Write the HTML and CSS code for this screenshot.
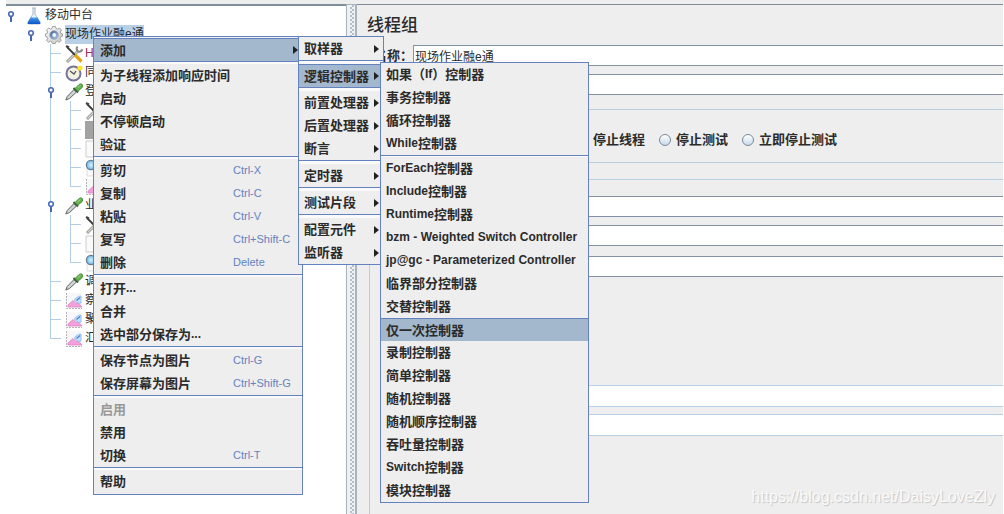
FILE: index.html
```html
<!DOCTYPE html>
<html lang="zh-CN">
<head>
<meta charset="utf-8">
<title>线程组</title>
<link rel="stylesheet" href="styles.css">
</head>
<body>
<svg class="defs" aria-hidden="true">
  <defs>
    <linearGradient id="liquid" x1="0" y1="0" x2="0" y2="1"><stop offset="0" stop-color="#4b9df0"/><stop offset="1" stop-color="#0b55c4"/></linearGradient>
    <linearGradient id="metal" x1="0" y1="0" x2="1" y2="1"><stop offset="0" stop-color="#fff"/><stop offset="1" stop-color="#c4c4c4"/></linearGradient>
    <linearGradient id="steel" x1="0" y1="0" x2="1" y2="1"><stop offset="0" stop-color="#39588f"/><stop offset="1" stop-color="#b9d2f2"/></linearGradient>
    <radialGradient id="lens"><stop offset="0" stop-color="#d8f2ff"/><stop offset="1" stop-color="#6db8e8"/></radialGradient>
  </defs>
  <symbol id="knob" viewBox="0 0 8 12"><path d="M4 6v6" stroke="#4666b0" stroke-width="2"/><circle cx="4" cy="4" r="2.3" fill="#fff" stroke="#4a6cba" stroke-width="1.6"/></symbol>
  <symbol id="flask" viewBox="0 0 18 18"><path d="M7 1h4M8 1v6L3 15q-1 2 1 2h10q2 0 1-2L10 7V1" fill="#eef3f8" stroke="#a9b8c8"/><path d="M6 10h6l3 5q1 2-1 2H4q-2 0-1-2z" fill="url(#liquid)"/><path d="M6 10q3 2 6 0" stroke="#9fd0ff" fill="none"/></symbol>
  <symbol id="gear" viewBox="0 0 18 18"><path d="M7.500.5h3l.5 2 1.500.7 2-1.200 2 2-1.200 2 .7 1.500 1.500.3v2.400l-1.800.6-.6 1.500 1.200 2-2 2-2-1.200-1.500.7-.5 1.700h-3L7 15.800l-1.500-.7-2 1.200-2-2 1.200-2-.7-1.500-1.500-.5V7.900L2.200 7.300 2.800 6 1.600 4l2-2 2 1.200L7 2.500z" fill="url(#metal)" stroke="#979797" stroke-width=".9"/><circle cx="9" cy="9" r="4.200" fill="url(#steel)" stroke="#8d9ab0" stroke-width=".8"/><circle cx="9.200" cy="9" r="1.900" fill="#f4f7fb"/></symbol>
  <symbol id="tools" viewBox="0 0 18 18"><path d="M2 17 13 6" stroke="#8c8c8c" stroke-width="2.800"/><path d="M2.500 16.500 12.500 6.500" stroke="#d6d6d6" stroke-width="1.200"/><path d="M12.500 1.500q-2 3 .8 5 3 .8 4.200-2.300" fill="none" stroke="#8a8a8a" stroke-width="2"/><path d="m2 2 8 8" stroke="#3a3a3a" stroke-width="1.800"/><path d="m10 10 6.500 6.500" stroke="#e5a313" stroke-width="3.200"/><path d="m1 1 3 1.500" stroke="#444" stroke-width="2"/></symbol>
  <symbol id="clock" viewBox="0 0 18 18"><circle cx="8.500" cy="9.500" r="7" fill="#f3f1df" stroke="#77749b" stroke-width="2"/><path d="M5 7l4 3 2-3" fill="none" stroke="#555" stroke-width="1.300"/><circle cx="15" cy="4" r="2.600" fill="#ffe326"/></symbol>
  <symbol id="dropper" viewBox="0 0 18 18"><path d="m.8 17 1.400-3.500L9 6.500l2.500 2.500-7 6.500z" fill="#cfd3d2" stroke="#5f6664"/><path d="m8.500 5 4.500 4.500" stroke="#3b5a35" stroke-width="2"/><path d="m10 5.500 4-4q2-1.500 3.300 0 1.200 1.500-.3 3.300l-4.200 3.500z" fill="#62b04b" stroke="#3f8535" stroke-width=".8"/><path d="m12.500 5 3-2.800" stroke="#a8dd92"/></symbol>
  <symbol id="page" viewBox="0 0 18 18"><path d="M1 1h15v16H1z" fill="#fafafa" stroke="#ccc"/><path d="M9 8h6m-3-2 3 2-3 3" stroke="#5d9bdc" fill="none"/></symbol>
  <symbol id="block" viewBox="0 0 18 18"><path d="M0 0h18v18H0z" fill="#a2a2a2"/></symbol>
  <symbol id="glass" viewBox="0 0 18 18"><path d="M2 7h15v10H2z" fill="#fafafa" stroke="#ddd"/><circle cx="6" cy="6" r="4.600" fill="url(#lens)" stroke="#647f96" stroke-width="1.300"/><path d="m10 10 5 5" stroke="#777" stroke-width="2"/></symbol>
  <symbol id="chart" viewBox="0 0 18 18"><path d="M1 1h16v15H1z" fill="#f7f7fa"/><path d="M1.500 1v15.500H17" fill="none" stroke="#b3b3b3" stroke-dasharray="2 1"/><path d="m3 15 0-2 5-4.500 3 3 2-1 4 4.500z" fill="#f3a0dd" stroke="#e07cc0" stroke-width=".7"/><path d="M9.500 9q0-3 2.500-3.500Q13 4 16 4v7q-2 1-4-.5z" fill="#c2e2ff" stroke="#8ab6ea" stroke-width=".8"/><path d="m11.500 8.500 3.500-3" stroke="#5379d3" stroke-width="1.200"/></symbol>
  <symbol id="arrow" viewBox="0 0 5 8"><path d="M0 0 5 4 0 8z" fill="#222"/></symbol>
</svg>

<main class="window">
  <nav class="tree-pane" aria-label="测试计划">
    <ul class="tree root">
      <li><div class="node"><svg class="knob"><use href="#knob"/></svg><svg class="icon"><use href="#flask"/></svg><span>移动中台</span></div>
        <ul class="tree">
          <li><div class="node"><svg class="knob"><use href="#knob"/></svg><svg class="icon"><use href="#gear"/></svg><span class="selected">现场作业融e通</span></div>
            <ul class="tree lined">
              <li><div class="node"><i class="twig"></i><svg class="icon"><use href="#tools"/></svg><span class="http">H</span></div></li>
              <li><div class="node"><i class="twig"></i><svg class="icon"><use href="#clock"/></svg><span>同</span></div></li>
              <li><div class="node"><svg class="knob"><use href="#knob"/></svg><svg class="icon"><use href="#dropper"/></svg><span>登</span></div>
                <ul class="tree lined">
                  <li><div class="node"><i class="twig"></i><svg class="icon"><use href="#tools"/></svg></div></li>
                  <li><div class="node"><i class="twig"></i><svg class="icon"><use href="#block"/></svg></div></li>
                  <li><div class="node"><i class="twig"></i><svg class="icon"><use href="#page"/></svg></div></li>
                  <li><div class="node"><i class="twig"></i><svg class="icon"><use href="#glass"/></svg></div></li>
                  <li><div class="node"><i class="twig"></i><svg class="icon"><use href="#chart"/></svg></div></li>
                </ul>
              </li>
              <li><div class="node"><svg class="knob"><use href="#knob"/></svg><svg class="icon"><use href="#dropper"/></svg><span>业</span></div>
                <ul class="tree lined">
                  <li><div class="node"><i class="twig"></i><svg class="icon"><use href="#tools"/></svg></div></li>
                  <li><div class="node"><i class="twig"></i><svg class="icon"><use href="#page"/></svg></div></li>
                  <li><div class="node"><i class="twig"></i><svg class="icon"><use href="#glass"/></svg></div></li>
                </ul>
              </li>
              <li><div class="node"><i class="twig"></i><svg class="icon"><use href="#dropper"/></svg><span>调</span></div></li>
              <li><div class="node"><i class="twig"></i><svg class="icon"><use href="#chart"/></svg><span>察</span></div></li>
              <li><div class="node"><i class="twig"></i><svg class="icon"><use href="#chart"/></svg><span>聚</span></div></li>
              <li><div class="node"><i class="twig"></i><svg class="icon"><use href="#chart"/></svg><span>汇</span></div></li>
            </ul>
          </li>
        </ul>
      </li>
    </ul>
  </nav>
  <div class="splitter"></div>
  <form class="editor">
    <h1>线程组</h1>
    <div class="row"><label for="name">名称：</label><input class="field" id="name" type="text" value="现场作业融e通"></div>
    <div class="row comment"><input class="field" type="text" aria-label="注释"></div>
    <fieldset class="choices">
      <label><input type="radio" name="on-error">停止线程</label>
      <label><input type="radio" name="on-error">停止测试</label>
      <label><input type="radio" name="on-error">立即停止测试</label>
    </fieldset>
    <fieldset class="properties">
      <input class="field" type="text" aria-label="线程数">
      <input class="field" type="text" aria-label="时间">
      <input class="field last" type="text" aria-label="循环次数">
      <div class="schedule">
        <input class="field pale" type="text" aria-label="持续时间">
        <input class="field pale" type="text" aria-label="启动延迟">
      </div>
    </fieldset>
  </form>
</main>

<div class="menu menu-main" role="menu">
  <button class="item active" role="menuitem">添加<svg class="arrow"><use href="#arrow"/></svg></button>
  <hr>
  <button class="item" role="menuitem">为子线程添加响应时间</button>
  <button class="item" role="menuitem">启动</button>
  <button class="item" role="menuitem">不停顿启动</button>
  <button class="item" role="menuitem">验证</button>
  <hr>
  <button class="item" role="menuitem">剪切<kbd>Ctrl-X</kbd></button>
  <button class="item" role="menuitem">复制<kbd>Ctrl-C</kbd></button>
  <button class="item" role="menuitem">粘贴<kbd>Ctrl-V</kbd></button>
  <button class="item" role="menuitem">复写<kbd>Ctrl+Shift-C</kbd></button>
  <button class="item" role="menuitem">删除<kbd>Delete</kbd></button>
  <hr>
  <button class="item" role="menuitem">打开<span class="latin">...</span></button>
  <button class="item" role="menuitem">合并</button>
  <button class="item" role="menuitem">选中部分保存为<span class="latin">...</span></button>
  <hr>
  <button class="item" role="menuitem">保存节点为图片<kbd>Ctrl-G</kbd></button>
  <button class="item" role="menuitem">保存屏幕为图片<kbd>Ctrl+Shift-G</kbd></button>
  <hr>
  <button class="item" role="menuitem" disabled>启用</button>
  <button class="item" role="menuitem">禁用</button>
  <button class="item" role="menuitem">切换<kbd>Ctrl-T</kbd></button>
  <hr>
  <button class="item" role="menuitem">帮助</button>
</div>

<div class="menu menu-add" role="menu">
  <button class="item" role="menuitem">取样器<svg class="arrow"><use href="#arrow"/></svg></button>
  <hr>
  <button class="item active" role="menuitem">逻辑控制器<svg class="arrow"><use href="#arrow"/></svg></button>
  <hr>
  <button class="item" role="menuitem">前置处理器<svg class="arrow"><use href="#arrow"/></svg></button>
  <button class="item" role="menuitem">后置处理器<svg class="arrow"><use href="#arrow"/></svg></button>
  <button class="item" role="menuitem">断言<svg class="arrow"><use href="#arrow"/></svg></button>
  <hr>
  <button class="item" role="menuitem">定时器<svg class="arrow"><use href="#arrow"/></svg></button>
  <hr>
  <button class="item" role="menuitem">测试片段<svg class="arrow"><use href="#arrow"/></svg></button>
  <hr>
  <button class="item" role="menuitem">配置元件<svg class="arrow"><use href="#arrow"/></svg></button>
  <button class="item" role="menuitem">监听器<svg class="arrow"><use href="#arrow"/></svg></button>
</div>

<div class="menu menu-logic" role="menu">
  <button class="item" role="menuitem">如果（<span class="latin">If</span>）控制器</button>
  <button class="item" role="menuitem">事务控制器</button>
  <button class="item" role="menuitem">循环控制器</button>
  <button class="item" role="menuitem"><span class="latin">While</span>控制器</button>
  <hr>
  <button class="item" role="menuitem"><span class="latin">ForEach</span>控制器</button>
  <button class="item" role="menuitem"><span class="latin">Include</span>控制器</button>
  <button class="item" role="menuitem"><span class="latin">Runtime</span>控制器</button>
  <button class="item" role="menuitem"><span class="latin">bzm - Weighted Switch Controller</span></button>
  <button class="item" role="menuitem"><span class="latin">jp@gc - Parameterized Controller</span></button>
  <button class="item" role="menuitem">临界部分控制器</button>
  <button class="item" role="menuitem">交替控制器</button>
  <button class="item active" role="menuitem">仅一次控制器</button>
  <button class="item" role="menuitem">录制控制器</button>
  <button class="item" role="menuitem">简单控制器</button>
  <button class="item" role="menuitem">随机控制器</button>
  <button class="item" role="menuitem">随机顺序控制器</button>
  <button class="item" role="menuitem">吞吐量控制器</button>
  <button class="item" role="menuitem"><span class="latin">Switch</span>控制器</button>
  <button class="item" role="menuitem">模块控制器</button>
</div>

<div class="watermark">https://blog.csdn.net/DaisyLoveZly</div>
</body>
</html>
```

FILE: styles.css
```css
* { box-sizing: border-box; }

body {
  position: relative;
  min-height: 100vh;
  margin: 0;
  overflow: hidden;
  background: #fff;
  color: #2b2b2b;
  font: 12px/19px "Liberation Sans", "Noto Sans CJK SC", sans-serif;
}

.defs { position: absolute; width: 0; height: 0; }

.window {
  display: grid;
  grid-template-columns: 340px 11px 1fr;
  min-height: 100vh;
  padding: 4px 1px 0 6px;
  background: linear-gradient(#eee, #eee) 6px 0 / 100% 4px no-repeat;
}

/* Tree */
.tree-pane { border-top: 2px solid #7f8d9d; }
.tree { margin: 0; padding: 0 0 0 20px; list-style: none; }
.tree.root { padding: 0; }
.node { display: flex; align-items: center; height: 19px; }
.knob { flex: none; width: 8px; height: 12px; margin: 0 10px 0 1px; }
.icon { flex: none; width: 18px; height: 18px; margin-right: 2px; }
.selected { background: #b8cfe5; }
.http { color: #a03050; }
.twig { width: 10px; height: 1px; margin: 0 4px 0 5px; background: #b3cfe8; }
.lined { background: linear-gradient(#b3cfe8, #b3cfe8) 24px 0 / 1px calc(100% - 9px) no-repeat; }

/* Split bar */
.splitter {
  border: solid #a8b3c0;
  border-width: 1px 2px 0 1px;
  background:
    conic-gradient(#b4bfcc 25%, transparent 0 50%, #b4bfcc 0 75%, transparent 0) 4px 0 / 4px 4px content-box,
    #f1f1f1;
  padding: 0 1px 0 3px;
}

/* Editor */
.editor {
  display: flex;
  flex-direction: column;
  border-top: 1px solid #7f8d9d;
  background: #eee;
  font-weight: bold;
  font-size: 13px;
}
h1 { margin: 0; padding: 9px 10px 7px; font-size: 17px; line-height: 24px; font-weight: 500; }
.row { display: flex; align-items: center; padding-left: 17px; }
.row label { flex: none; }
.comment { padding: 8px 0 0 56px; }
.field {
  display: block;
  width: 100%;
  height: 21px;
  padding: 0 1px;
  border: solid #8392a3;
  border-width: 1px 0 1px 1px;
  background: #fff;
  color: #2b2b2b;
  font: 12px/19px "Liberation Sans", "Noto Sans CJK SC", sans-serif;
}
fieldset { min-width: 0; margin: 0; padding: 0; border: solid #b8cfe0; border-width: 1px 0 0 1px; }
.choices {
  display: flex;
  align-items: center;
  gap: 14px;
  margin: 14px 0 0 12px;
  padding: 20px 0 13px 206px;
  border-bottom-width: 1px;
}
.choices label { display: flex; align-items: center; gap: 5px; }
.choices input {
  appearance: none;
  width: 12px;
  height: 12px;
  margin: 0;
  border: 1px solid #7a8a99;
  border-radius: 50%;
  background: linear-gradient(#fff, #c8d9ea);
}
.properties { flex: 1; margin: 16px 0 0 12px; padding: 16px 0 0 100px; }
.properties .field { margin-bottom: 8px; }
.properties .last { margin: 10px 0 0; }
.schedule { padding-top: 108px; }
.field.pale { height: 22px; margin-bottom: 7px; border-color: #b8cfe5; }

/* Menus */
.menu { position: absolute; border: 1px solid #6382bf; background: #eee; }
.menu-main { left: 93px; top: 36px; width: 210px; padding: 1px 0; }
.menu-add { left: 298px; top: 36px; width: 86px; }
.menu-logic { left: 380px; top: 62px; width: 209px; }
.item {
  display: flex;
  align-items: center;
  width: 100%;
  height: 23px;
  margin: 0;
  padding: 0 4px 0 6px;
  border: 0;
  background: none;
  color: #2b2b2b;
  font: bold 13px/21px "Liberation Sans", "Noto Sans CJK SC", sans-serif;
  text-align: left;
  white-space: nowrap;
}
.menu-add .item { padding: 0 4px 0 5px; }
.menu-logic .item { padding-left: 5px; }
.item:disabled { color: #999; }
.item.active { border-top: 1px solid #6382bf; background: #a3b8cc; }
.latin { font-size: 12px; }
.arrow { width: 5px; height: 8px; margin-left: auto; }
kbd { width: 59px; margin-left: auto; color: #6382bf; font: 11px/21px "Liberation Sans", sans-serif; }
.menu-main kbd { margin-right: 6px; }
hr { height: 3px; margin: 0; border: solid #6382bf; border-width: 1px 0 0; background: #fafafa; }
.menu-add hr { height: 4px; }
.menu-logic hr { height: 2px; }

.watermark {
  position: absolute;
  right: 9px;
  bottom: 8px;
  color: #fafafa;
  font-size: 16px;
  text-shadow: 1px 1px 1px #c4c4c4;
}
```
